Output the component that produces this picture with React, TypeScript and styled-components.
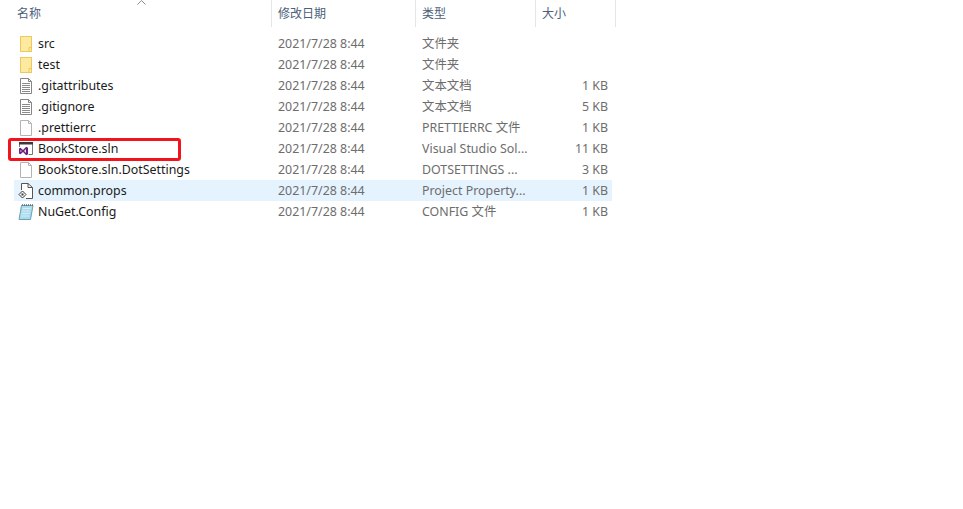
import React from "react";
import styled, { createGlobalStyle } from "styled-components";

type FileIconKind = "folder" | "lines" | "blank" | "sln" | "props" | "config";

type FileRow = {
  name: string;
  type: string;
  size?: string;
  icon: FileIconKind;
  hovered?: boolean;
  marked?: boolean;
};

const DATE = "2021/7/28 8:44";

const rows: FileRow[] = [
  { name: "src", type: "文件夹", icon: "folder" },
  { name: "test", type: "文件夹", icon: "folder" },
  { name: ".gitattributes", type: "文本文档", size: "1 KB", icon: "lines" },
  { name: ".gitignore", type: "文本文档", size: "5 KB", icon: "lines" },
  { name: ".prettierrc", type: "PRETTIERRC 文件", size: "1 KB", icon: "blank" },
  { name: "BookStore.sln", type: "Visual Studio Sol...", size: "11 KB", icon: "sln", marked: true },
  { name: "BookStore.sln.DotSettings", type: "DOTSETTINGS ...", size: "3 KB", icon: "blank" },
  { name: "common.props", type: "Project Property...", size: "1 KB", icon: "props", hovered: true },
  { name: "NuGet.Config", type: "CONFIG 文件", size: "1 KB", icon: "config" },
];

function FileIcon({ kind }: { kind: FileIconKind }) {
  if (kind === "folder") {
    return (
      <svg width="16" height="16" viewBox="0 0 16 16">
        <rect x="2.5" y="0.5" width="11" height="15" fill="#fde9a0" stroke="#ecc95c" />
        <path d="M11 15.5V11.5H13.5" fill="none" stroke="#ecc95c" />
      </svg>
    );
  }
  if (kind === "sln") {
    return (
      <svg width="16" height="16" viewBox="0 0 16 16">
        <path d="M1.5 6V1.5H14.5V13.5H10.5" fill="#fff" stroke="#777" />
        <rect x="1" y="1" width="14" height="2.5" fill="#3a3a3a" />
        <path d="M1 7.5L2.5 6.8L5 9L8.2 5.8L10 6.7V13.3L8.2 14.2L5 11L2.5 13.2L1 12.5Z" fill="#68217a" />
        <path d="M2.5 8.7L3.8 10L2.5 11.3ZM8 8L6 10L8 12Z" fill="#e9dcef" />
      </svg>
    );
  }
  if (kind === "props") {
    return (
      <svg width="16" height="16" viewBox="0 0 16 16">
        <path d="M3.5 7V0.5H10L14.5 4.5V15.5H8" fill="#fff" stroke="#555" />
        <path d="M10 0.5V4.5H14.5" fill="none" stroke="#555" />
        <path d="M4.5 8L8 11.5L4.5 15L1 11.5Z" fill="#fff" stroke="#333" />
        <rect x="3.5" y="10.5" width="2" height="2" fill="#333" />
      </svg>
    );
  }
  if (kind === "config") {
    return (
      <svg width="16" height="16" viewBox="0 0 16 16">
        <path d="M3.5 1.5H15L12.5 15.5H1Z" fill="#a9dcee" stroke="#6f9fb2" />
        <path d="M4 1H15" stroke="#666" strokeWidth="1.4" strokeDasharray="1 1" />
        <path d="M4.5 4.5H12.5M4 7H12M3.5 9.5H11.5M3.2 12H11" stroke="#d6eef6" />
      </svg>
    );
  }
  return (
    <svg width="16" height="16" viewBox="0 0 16 16">
      <path d="M2.5 0.5H10.5L13.5 3.5V15.5H2.5Z" fill="#fff" stroke={kind === "lines" ? "#858585" : "#b4b4b4"} />
      <path d="M10.5 0.5V3.5H13.5" fill="none" stroke={kind === "lines" ? "#858585" : "#b4b4b4"} />
      {kind === "lines" && (
        <path d="M4 5.5H12M4 7.5H12M4 9.5H12M4 11.5H12M4 13.5H12" stroke="#8a8a8a" />
      )}
    </svg>
  );
}

export default function App() {
  return (
    <>
      <GlobalStyle />
      <Explorer>
        <SortArrow viewBox="0 0 9 5" width="9" height="5">
          <path d="M0.5 4.5L4.5 0.5L8.5 4.5" fill="none" stroke="#8a8a8a" />
        </SortArrow>
        <HeaderRow>
          <HeaderCell $first>名称</HeaderCell>
          <HeaderCell>修改日期</HeaderCell>
          <HeaderCell>类型</HeaderCell>
          <HeaderCell>大小</HeaderCell>
        </HeaderRow>
        <List>
          {rows.map((row) => (
            <Row key={row.name} $hovered={row.hovered}>
              <NameCell>
                <IconSlot>
                  <FileIcon kind={row.icon} />
                </IconSlot>
                {row.name}
              </NameCell>
              <InfoCell>{DATE}</InfoCell>
              <InfoCell>{row.type}</InfoCell>
              <SizeCell>{row.size}</SizeCell>
              {row.marked && <RedMark />}
            </Row>
          ))}
        </List>
      </Explorer>
    </>
  );
}

const GlobalStyle = createGlobalStyle`
  html, body {
    margin: 0;
    padding: 0;
    background: #fff;
  }
  body {
    font-family: "Noto Sans", "Noto Sans CJK SC", sans-serif;
    font-size: 12.4px;
  }
`;

const Explorer = styled.div`
  position: relative;
  width: 963px;
  height: 509px;
  overflow: hidden;
  background: #fff;
`;

const SortArrow = styled.svg`
  position: absolute;
  top: 0;
  left: 137px;
`;

const HeaderRow = styled.div`
  display: grid;
  grid-template-columns: 272px 144px 120px 80px;
  height: 27px;
`;

const HeaderCell = styled.div<{ $first?: boolean }>`
  display: flex;
  align-items: center;
  padding-left: ${({ $first }) => ($first ? "17px" : "6px")};
  padding-bottom: 1px;
  font-size: 12px;
  color: #4c607a;
  border-right: 1px solid #e5e5e5;
`;

const List = styled.div`
  display: flex;
  flex-direction: column;
  padding: 6px 0 0 14px;
`;

const Row = styled.div<{ $hovered?: boolean }>`
  position: relative;
  display: grid;
  grid-template-columns: 258px 144px 120px 72px;
  width: 598px;
  height: 21px;
  line-height: 21px;
  align-items: center;
  background: ${({ $hovered }) => ($hovered ? "#e5f3ff" : "transparent")};
`;

const NameCell = styled.div`
  display: flex;
  align-items: center;
  color: #1a1a1a;
  white-space: nowrap;
`;

const IconSlot = styled.span`
  display: flex;
  width: 16px;
  height: 16px;
  margin: 0 4px 0 4px;
`;

const InfoCell = styled.div`
  padding-left: 6px;
  color: #6d6d6d;
  white-space: nowrap;
`;

const SizeCell = styled(InfoCell)`
  padding-left: 0;
  text-align: right;
`;

const RedMark = styled.div`
  position: absolute;
  top: 0;
  left: -6px;
  width: 173px;
  height: 23px;
  box-sizing: border-box;
  border: 3px solid #f2141c;
  border-radius: 3px;
`;
